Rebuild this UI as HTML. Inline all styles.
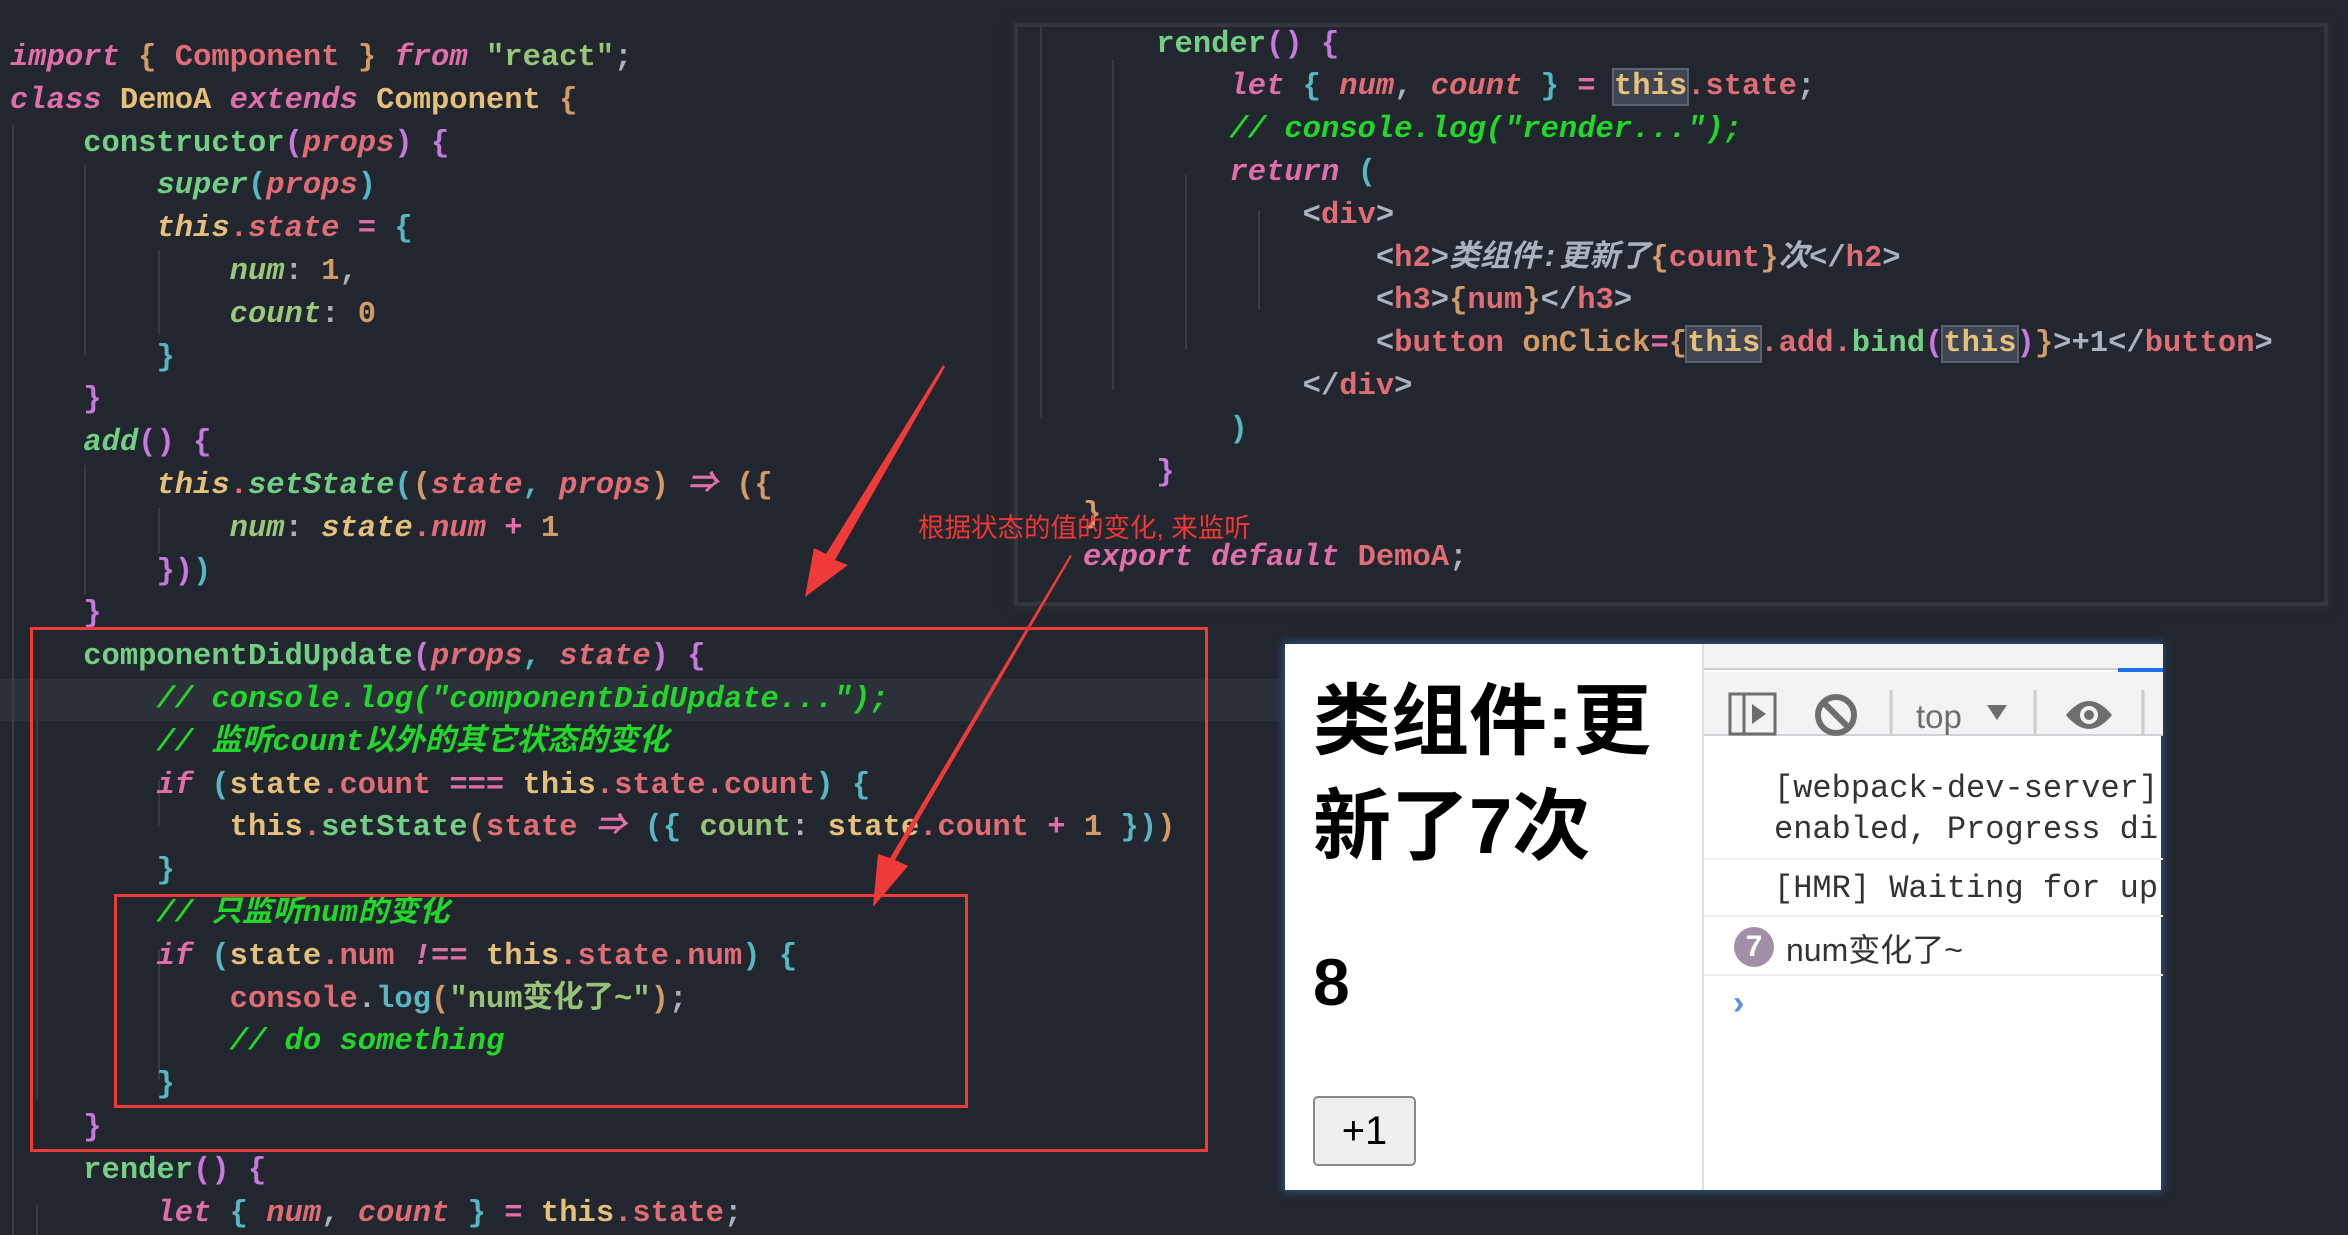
<!DOCTYPE html>
<html><head><meta charset="utf-8"><style>
*{margin:0;padding:0;box-sizing:border-box}
body{width:2348px;height:1235px;background:#22262e;position:relative;overflow:hidden;font-family:"Liberation Mono","Noto Sans CJK SC",monospace}
.l{position:absolute;white-space:pre;font-size:30.5px;line-height:42.8px;height:42.8px;color:#abb2bf;font-weight:bold}
.k{color:#e06fa9;font-style:italic}.C{color:#e06c75}.y{color:#e5c07b}.g{color:#73cf84}.s{color:#98c379}.o{color:#d19a66}.p{color:#c678dd}.c{color:#56b6c2}.r{color:#e06c75}.i{font-style:italic}.cm{color:#22d62a;font-style:italic}.w{color:#abb2bf}.n{color:#9bc77a;font-style:italic}
.hl{background:#3e4451;outline:2px solid #5c6370}
.guide{position:absolute;width:2px;background:#363b44}
</style></head><body>
<div style="position:absolute;left:0;top:679px;width:1285px;height:42px;background:#2b3039"></div>
<div class="guide" style="left:12px;top:125px;height:1110px"></div>
<div class="guide" style="left:84px;top:165px;height:190px"></div>
<div class="guide" style="left:158px;top:250px;height:85px"></div>
<div class="guide" style="left:84px;top:465px;height:130px"></div>
<div class="guide" style="left:158px;top:508px;height:45px"></div>
<div class="guide" style="left:36px;top:680px;height:420px"></div>
<div class="guide" style="left:158px;top:780px;height:45px"></div>
<div class="guide" style="left:158px;top:950px;height:130px"></div>
<div class="guide" style="left:36px;top:1205px;height:30px"></div>

<div class="l" style="left:10px;top:37px"><span class="k">import</span> <span class="o">{</span> <span class="C">Component</span> <span class="o">}</span> <span class="k">from</span> <span class="s">"react"</span>;</div>
<div class="l" style="left:10px;top:79.8px"><span class="k">class</span> <span class="y">DemoA</span> <span class="k">extends</span> <span class="y">Component</span> <span class="o">{</span></div>
<div class="l" style="left:10px;top:122.6px">    <span class="g">constructor</span><span class="p">(</span><span class="r i">props</span><span class="p">)</span> <span class="p">{</span></div>
<div class="l" style="left:10px;top:165.4px">        <span class="g i">super</span><span class="c">(</span><span class="r i">props</span><span class="c">)</span></div>
<div class="l" style="left:10px;top:208.2px">        <span class="y i">this</span><span class="r">.</span><span class="r i">state</span> <span class="k">=</span> <span class="c">{</span></div>
<div class="l" style="left:10px;top:251px">            <span class="n">num</span>: <span class="o">1</span>,</div>
<div class="l" style="left:10px;top:293.8px">            <span class="n">count</span>: <span class="o">0</span></div>
<div class="l" style="left:10px;top:336.6px">        <span class="c">}</span></div>
<div class="l" style="left:10px;top:379.4px">    <span class="p">}</span></div>
<div class="l" style="left:10px;top:422.2px">    <span class="g i">add</span><span class="p">()</span> <span class="p">{</span></div>
<div class="l" style="left:10px;top:465px">        <span class="y i">this</span><span class="r">.</span><span class="g i">setState</span><span class="c">(</span><span class="o">(</span><span class="r i">state</span><span class="c">,</span> <span class="r i">props</span><span class="o">)</span> <span class="k">⇒</span> <span class="o">({</span></div>
<div class="l" style="left:10px;top:507.8px">            <span class="n">num</span>: <span class="y i">state</span><span class="r">.</span><span class="r i">num</span> <span class="k">+</span> <span class="o">1</span></div>
<div class="l" style="left:10px;top:550.6px">        <span class="p">})</span><span class="c">)</span></div>
<div class="l" style="left:10px;top:593.4px">    <span class="p">}</span></div>
<div class="l" style="left:10px;top:636.2px">    <span class="g">componentDidUpdate</span><span class="p">(</span><span class="r i">props</span><span class="c">,</span> <span class="r i">state</span><span class="p">)</span> <span class="p">{</span></div>
<div class="l" style="left:10px;top:679px">        <span class="cm">// console.log("componentDidUpdate..."); </span></div>
<div class="l" style="left:10px;top:721.8px">        <span class="cm">// 监听count以外的其它状态的变化</span></div>
<div class="l" style="left:10px;top:764.6px">        <span class="k">if</span> <span class="c">(</span><span class="y">state</span><span class="r">.count</span> <span class="k">===</span> <span class="y">this</span><span class="r">.state.count</span><span class="c">)</span> <span class="c">{</span></div>
<div class="l" style="left:10px;top:807.4px">            <span class="y">this</span><span class="r">.</span><span class="g">setState</span><span class="o">(</span><span class="r">state</span> <span class="k">⇒</span> <span class="c">({</span> <span class="s">count</span>: <span class="y">state</span><span class="r">.count</span> <span class="k">+</span> <span class="o">1</span> <span class="c">})</span><span class="o">)</span></div>
<div class="l" style="left:10px;top:850.2px">        <span class="c">}</span></div>
<div class="l" style="left:10px;top:893px">        <span class="cm">// 只监听num的变化</span></div>
<div class="l" style="left:10px;top:935.8px">        <span class="k">if</span> <span class="c">(</span><span class="y">state</span><span class="r">.num</span> <span class="k">!==</span> <span class="y">this</span><span class="r">.state.num</span><span class="c">)</span> <span class="c">{</span></div>
<div class="l" style="left:10px;top:978.6px">            <span class="r">console</span><span class="w">.</span><span class="c">log</span><span class="o">(</span><span class="s">"num变化了~"</span><span class="o">)</span>;</div>
<div class="l" style="left:10px;top:1021.4px">            <span class="cm">// do something</span></div>
<div class="l" style="left:10px;top:1064.2px">        <span class="c">}</span></div>
<div class="l" style="left:10px;top:1107px">    <span class="p">}</span></div>
<div class="l" style="left:10px;top:1149.8px">    <span class="g">render</span><span class="p">()</span> <span class="p">{</span></div>
<div class="l" style="left:10px;top:1192.6px">        <span class="k">let</span> <span class="c">{</span> <span class="r i">num</span>, <span class="r i">count</span> <span class="c">}</span> <span class="k">=</span> <span class="y">this</span><span class="r">.state</span>;</div>

<div style="position:absolute;left:1018px;top:27px;width:1306px;height:575px;background:#22262e;box-shadow:0 0 0 4px #33373d,0 0 10px 6px #2a2d33"></div>
<div class="guide" style="left:1040px;top:27px;height:390px"></div>
<div class="guide" style="left:1112px;top:60px;height:330px"></div>
<div class="guide" style="left:1185px;top:175px;height:175px"></div>
<div class="guide" style="left:1258px;top:210px;height:100px"></div>
<div class="l" style="left:1083px;top:23.6px">    <span class="g">render</span><span class="p">()</span> <span class="p">{</span></div>
<div class="l" style="left:1083px;top:66.4px">        <span class="k">let</span> <span class="c">{</span> <span class="r i">num</span>, <span class="r i">count</span> <span class="c">}</span> <span class="k">=</span> <span class="y hl">this</span><span class="r">.state</span>;</div>
<div class="l" style="left:1083px;top:109.2px">        <span class="cm">// console.log("render..."); </span></div>
<div class="l" style="left:1083px;top:152px">        <span class="k">return</span> <span class="c">(</span></div>
<div class="l" style="left:1083px;top:194.8px">            <span class="w">&lt;</span><span class="r">div</span><span class="w">&gt;</span></div>
<div class="l" style="left:1083px;top:237.6px">                <span class="w">&lt;</span><span class="r">h2</span><span class="w">&gt;</span><span class="w i">类组件:更新了</span><span class="o">{</span><span class="r">count</span><span class="o">}</span><span class="w i">次</span><span class="w">&lt;/</span><span class="r">h2</span><span class="w">&gt;</span></div>
<div class="l" style="left:1083px;top:280.4px">                <span class="w">&lt;</span><span class="r">h3</span><span class="w">&gt;</span><span class="o">{</span><span class="r">num</span><span class="o">}</span><span class="w">&lt;/</span><span class="r">h3</span><span class="w">&gt;</span></div>
<div class="l" style="left:1083px;top:323.2px">                <span class="w">&lt;</span><span class="r">button</span> <span class="o">onClick</span><span class="k">=</span><span class="o">{</span><span class="y hl">this</span><span class="r">.add.</span><span class="g">bind</span><span class="p">(</span><span class="y hl">this</span><span class="p">)</span><span class="o">}</span>&gt;+1&lt;/<span class="r">button</span>&gt;</div>
<div class="l" style="left:1083px;top:366px">            <span class="w">&lt;/</span><span class="r">div</span><span class="w">&gt;</span></div>
<div class="l" style="left:1083px;top:408.8px">        <span class="c">)</span></div>
<div class="l" style="left:1083px;top:451.6px">    <span class="p">}</span></div>
<div class="l" style="left:1083px;top:494.4px"><span class="o">}</span></div>
<div class="l" style="left:1083px;top:537.2px"><span class="k">export</span> <span class="k">default</span> <span class="C">DemoA</span>;</div>

<div style="position:absolute;left:918px;top:506px;font-family:'Liberation Sans','Noto Sans CJK SC',sans-serif;font-size:26.5px;color:#f23535;white-space:pre">根据状态的值的变化, 来监听</div>

<div style="position:absolute;left:30px;top:627px;width:1178px;height:525px;border:3px solid #f03a3a"></div>
<div style="position:absolute;left:114px;top:894px;width:854px;height:214px;border:3px solid #f03a3a"></div>

<svg style="position:absolute;left:0;top:0" width="2348" height="1235">
<polygon points="943,365 945,367 835,560 848,565 805,597 814,548 826,554" fill="#f03a3a"/>
<polygon points="1070,555 1072,556 895,860 908,866 873,907 878,854 890,858" fill="#f03a3a"/>
</svg>

<div style="position:absolute;left:1285px;top:644px;width:876px;height:546px;background:#fff;box-shadow:0 0 8px 3px #2c4a70">
 <div style="position:absolute;left:28px;top:25px;font-family:'Liberation Sans','Noto Sans CJK SC',sans-serif;font-weight:bold;font-size:78px;line-height:105px;color:#000;width:390px">类组件:更<br>新了7次</div>
 <div style="position:absolute;left:28px;top:300px;font-family:'Liberation Sans',sans-serif;font-weight:bold;font-size:66px;color:#000">8</div>
 <div style="position:absolute;left:28px;top:452px;width:103px;height:70px;background:#efefef;border:2px solid #8a8a8a;border-radius:5px;font-family:'Liberation Sans',sans-serif;font-size:40px;text-align:center;line-height:66px;color:#000">+1</div>
 <div style="position:absolute;left:417px;top:0;width:459px;height:546px;background:#fff;border-left:2px solid #dadce0">
  <div style="position:absolute;left:0;top:0;width:459px;height:26px;background:#f1f3f4;border-bottom:2px solid #cbcdd1"></div>
  <div style="position:absolute;left:414px;top:24px;width:45px;height:4px;background:#1a73e8"></div>
  <div style="position:absolute;left:0;top:28px;width:459px;height:64px;background:#f1f3f4;border-bottom:2px solid #d0d2d6"></div>
  <svg style="position:absolute;left:0;top:28px" width="459" height="64">
   <rect x="26" y="22" width="45" height="40" fill="none" stroke="#6e6e6e" stroke-width="3"/>
   <line x1="40" y1="22" x2="40" y2="62" stroke="#6e6e6e" stroke-width="3"/>
   <polygon points="48,32 62,42 48,52" fill="#6e6e6e"/>
   <circle cx="132" cy="43" r="18" fill="none" stroke="#6e6e6e" stroke-width="6"/>
   <line x1="119" y1="30" x2="145" y2="56" stroke="#6e6e6e" stroke-width="6"/>
   <line x1="187" y1="18" x2="187" y2="64" stroke="#ccc" stroke-width="3"/>
   <text x="212" y="56" font-family="Liberation Sans" font-size="33" fill="#6e6e6e">top</text>
   <polygon points="283,33 303,33 293,48" fill="#6e6e6e"/>
   <line x1="331" y1="18" x2="331" y2="64" stroke="#ccc" stroke-width="3"/>
   <path d="M362,43 Q385,15 408,43 Q385,71 362,43Z" fill="#6e6e6e"/>
   <circle cx="385" cy="43" r="9" fill="#f1f3f4"/><circle cx="385" cy="43" r="5" fill="#6e6e6e"/>
   <line x1="439" y1="18" x2="439" y2="64" stroke="#ccc" stroke-width="3"/>
  </svg>
  <div style="position:absolute;left:70px;top:124px;font-family:'Liberation Mono',monospace;font-size:32px;line-height:41px;color:#333;white-space:pre">[webpack-dev-server]
enabled, Progress di</div>
  <div style="position:absolute;left:0;top:214px;width:459px;height:2px;background:#eceef0"></div>
  <div style="position:absolute;left:70px;top:226px;font-family:'Liberation Mono',monospace;font-size:32px;color:#333;white-space:pre">[HMR] Waiting for up</div>
  <div style="position:absolute;left:0;top:271px;width:459px;height:2px;background:#eceef0"></div>
  <div style="position:absolute;left:30px;top:283px;width:40px;height:40px;border-radius:50%;background:#a48fa8;color:#fff;font-family:'Liberation Sans',sans-serif;font-weight:bold;font-size:30px;text-align:center;line-height:40px">7</div>
  <div style="position:absolute;left:82px;top:281px;font-family:'Liberation Sans','Noto Sans CJK SC',sans-serif;font-size:32px;color:#333;white-space:pre">num变化了~</div>
  <div style="position:absolute;left:0;top:330px;width:459px;height:2px;background:#eceef0"></div>
  <div style="position:absolute;left:29px;top:340px;font-family:'Liberation Sans',sans-serif;font-size:34px;color:#5a8fe6;font-weight:bold">›</div>
 </div>
</div>
</body></html>
